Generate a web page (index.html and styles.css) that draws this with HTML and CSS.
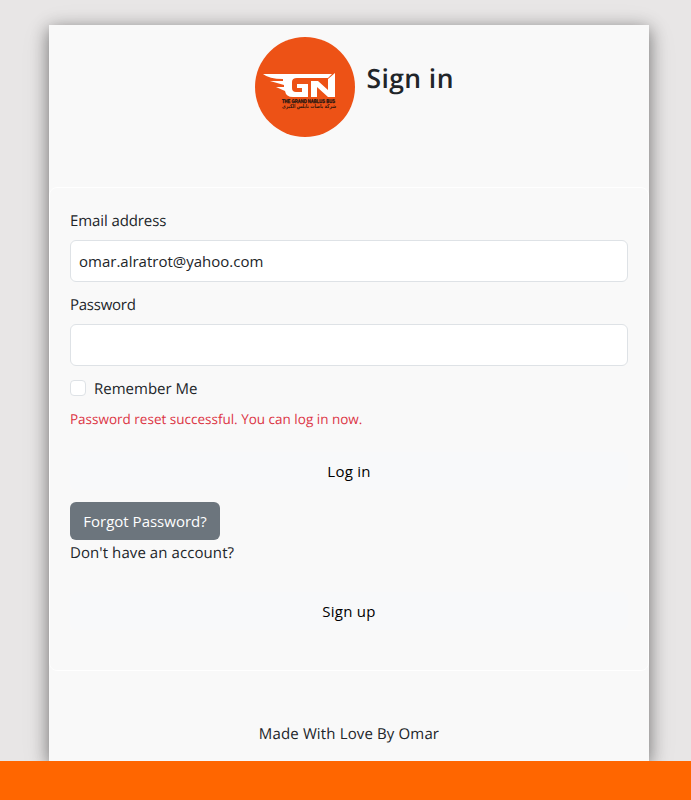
FILE: index.html
```html
<!DOCTYPE html>
<html lang="en">
<head>
<meta charset="utf-8">
<title>Sign in</title>
<link rel="stylesheet" href="styles.css">
</head>
<body>
<main class="card">
  <header class="head">
    <svg class="logo" viewBox="0 0 100 100" role="img" aria-label="The Grand Nablus Bus">
      <circle cx="50" cy="50" r="50" fill="#ed5216"/>
      <path fill="#fff" d="M8 37H77L73 41H42Q37 41 37 45V51Q37 55 41 55H47V51H42V47H53V60H38Q31 60 30 54L21 50H29V48L15 44H28V42Q14 42 8 37Z"/>
      <path fill="#fff" d="M56 60V44H63L73 53V42L80 36V60H73L62 50V60Z"/>
      <text class="logo-en" x="27" y="66" textLength="53" lengthAdjust="spacingAndGlyphs">THE GRAND NABLUS BUS</text>
      <text class="logo-ar" x="54" y="71" text-anchor="middle" textLength="54" lengthAdjust="spacingAndGlyphs">شركة باصات نابلس الكبرى</text>
    </svg>
    <h1 class="title">Sign in</h1>
  </header>
  <form class="form">
    <label class="label l-email" for="email">Email address</label>
    <input class="input" id="email" type="email" value="omar.alratrot@yahoo.com">
    <label class="label l-pass" for="password">Password</label>
    <input class="input" id="password" type="password">
    <label class="check"><input class="box" type="checkbox"><span class="l-remember">Remember Me</span></label>
    <p class="message">Password reset successful. You can log in now.</p>
    <button class="btn light login" type="button">Log in</button>
    <button class="btn forgot" type="button">Forgot Password?</button>
    <p class="question">Don't have an account?</p>
    <button class="btn light signup" type="button">Sign up</button>
  </form>
  <p class="credit">Made With Love By Omar</p>
</main>
<footer class="bar"></footer>
</body>
</html>
```
FILE: styles.css
```css
* { box-sizing: border-box; }
body {
  margin: 0;
  padding-top: 25px;
  height: 800px;
  overflow: hidden;
  background: #e8e6e6;
  color: #212529;
  font: 15px/24px "Open Sans", "Noto Sans", sans-serif;
  text-rendering: geometricPrecision;
}
.card {
  width: 600px;
  height: 736px;
  margin-left: 49px;
  background: #f9f9f9;
  box-shadow: 0 4px 16px rgba(0, 0, 0, .45), 0 6px 28px rgba(0, 0, 0, .12);
}
.head {
  display: flex;
  justify-content: center;
  gap: 12px;
  height: 162px;
  padding: 12px 0 0 11px;
}
.logo { width: 100px; height: 100px; }
.logo-en { font: 900 5.3px "Liberation Sans", sans-serif; fill: #111; stroke: #111; stroke-width: .25px; }
.logo-ar { font: bold 5.2px "DejaVu Sans", sans-serif; fill: #38170c; }
.title { margin: 24px 0 0; width: 88px; font-size: 26.5px; line-height: 34px; font-weight: 600; white-space: nowrap; letter-spacing: .4px; }
.form {
  display: flex;
  flex-direction: column;
  height: 484px;
  padding: 20px;
  border: 1px solid #fff;
  border-radius: 8px;
}
.label { padding-top: 1px; margin-bottom: 7px; }
.l-email { letter-spacing: -.1px; }
.l-pass { letter-spacing: -.25px; }
.input {
  height: 42px;
  margin-bottom: 10px;
  padding: 0 8px;
  border: 1px solid #dee2e6;
  border-radius: 6px;
  background: #fff;
  color: #212529;
  font: inherit;
}
.check { display: flex; align-items: center; gap: 8px; height: 24px; }
.l-remember { padding-top: 2px; }
.box {
  appearance: none;
  width: 16px;
  height: 16px;
  margin: 0;
  border: 1px solid #dee2e6;
  border-radius: 4px;
  background: #fff;
}
.message { margin: 9px 0 0; font-size: 13.5px; line-height: 21px; color: #dc3545; }
.btn {
  height: 38px;
  padding: 0;
  border: 0;
  border-radius: 6px;
  font: inherit;
}
.light { background: #f8f9fa; color: #000; letter-spacing: .25px; }
.login { margin-top: 22px; }
.forgot { width: 150px; margin-top: 12px; background: #6c757d; color: #fff; }
.question { margin: 1px 0 0; letter-spacing: .08px; }
.signup { margin-top: 27px; }
.credit { margin: 51px 0 0; text-align: center; letter-spacing: .14px; }
.bar { position: relative; height: 39px; background: #ff6600; }
```
